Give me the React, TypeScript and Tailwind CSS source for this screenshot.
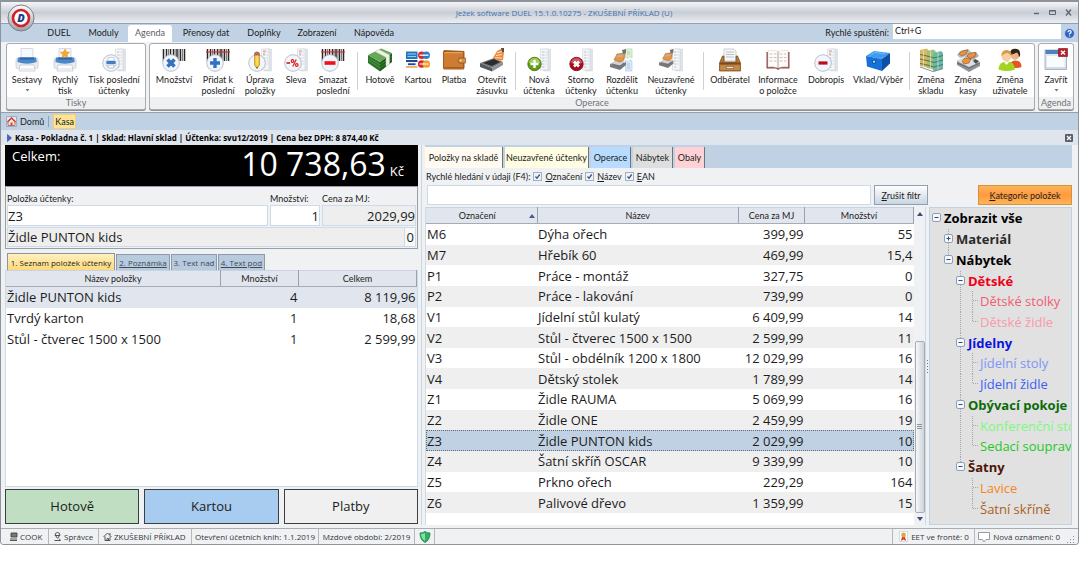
import type { ReactNode } from "react";

/* ---------- ribbon icons ---------- */

function Svg({ children }: { children: ReactNode }) {
  return (
    <svg viewBox="0 0 24 24" className="h-6 w-6 shrink-0" aria-hidden="true">
      {children}
    </svg>
  );
}

function Printer() {
  return (
    <>
      <path d="M6 .5h12V10H6z" fill="#f6f9fc" stroke="#cdd2d9" strokeWidth=".8" />
      <path d="M1 12q0-2 2-2h18q2 0 2 2v7q0 1.500-1.500 1.500h-19Q1 20.500 1 19z" fill="#e9edf2" stroke="#c3c8d0" strokeWidth=".7" />
      <path d="M3 9.500h18l.7 4.500q-9.700 3.500-19.400 0z" fill="#4a88c9" />
      <path d="M5 9.500h14v2H5z" fill="#2f67a8" />
      <path d="M5 17h14l1 6H4z" fill="#fff" stroke="#b9bec7" strokeWidth=".7" />
      <path d="M5.500 21h13" stroke="#d4d8de" strokeWidth="1" />
    </>
  );
}

function Receipt({ x = 13 }: { x?: number }) {
  return (
    <g transform={`translate(${x} 0)`}>
      <path d="M3.500 1h7v22h-7z" fill="#dfe3e8" stroke="#cfd4da" strokeWidth=".5" />
      <path d="M.5 1h7.500v21H.5z" fill="#f5f6f8" stroke="#cdd2d8" strokeWidth=".6" />
      <path d="M2 4h2.500M2 7h2.500M2 10h2.500M2 13h2.500M2 16h2.500M2 19h2.500" stroke="#b9bfc7" strokeWidth=".9" />
      <path d="M5.500 4H7M5.500 7H7M5.500 10H7M5.500 13H7M5.500 16H7" stroke="#cdd2d8" strokeWidth=".9" />
    </g>
  );
}

function Barcode({ beam }: { beam?: boolean }) {
  return (
    <>
      <path d="M1.500 1v12M4.500 1v12M8.500 1v12M11.500 1v12M15 1v12M18.500 1v12M22.500 1v12" stroke="#262626" strokeWidth="1.500" />
      <path d="M6.500 1v12M13.200 1v12M16.800 1v12M20.500 1v12" stroke="#444" strokeWidth=".7" />
      {beam && <path d="M0 4h24" stroke="#e31e24" strokeWidth="1" />}
    </>
  );
}

function Disc() {
  return <circle cx="9" cy="15" r="8.300" fill="#f2f6fb" stroke="#aebccd" strokeWidth=".9" />;
}

function Register() {
  return (
    <>
      <path d="M0 15l6-3 10 1v3l-6 5-10-3z" fill="#75787d" />
      <path d="M0 15l6-3 10 1-6 4z" fill="#d0d3d6" />
      <path d="M4 11l3-6 8-1-1 7-4 2z" fill="#eb9440" stroke="#a05b1d" strokeWidth=".5" />
      <path d="M7 6l6-.5-.5 2.500-6.500.5z" fill="#b8b0a0" />
      <path d="M12 1l4-1v4l-3 1z" fill="#6e7176" />
      <path d="M2 15l8 2 4-3" fill="none" stroke="#55585c" strokeWidth=".8" />
    </>
  );
}

const icons: Record<string, ReactNode> = {
  printer: <Printer />,
  printerStar: (
    <>
      <Printer />
      <path d="M12 1l1.500 2.900 3.200.4-2.400 2.200.6 3.200L12 8.100 9.100 9.700l.6-3.200-2.400-2.200 3.200-.4z" fill="#f9a825" stroke="#e08412" strokeWidth=".4" />
    </>
  ),
  printLast: (
    <>
      <Receipt />
      <Disc />
      <path d="M6 9.500h6V13H6z" fill="#fff" stroke="#a9b6c6" strokeWidth=".6" />
      <path d="M4 13h10v5H4z" fill="#e9edf2" stroke="#a9b6c6" strokeWidth=".5" />
      <path d="M4.500 13h9v3h-9z" fill="#3f7fc4" />
      <path d="M6 17h6v3H6z" fill="#fff" stroke="#8aa0ba" strokeWidth=".6" />
    </>
  ),
  times: (
    <>
      <Barcode />
      <Disc />
      <path d="M5.500 11.500l7 7M12.500 11.500l-7 7" stroke="#3272c0" strokeWidth="3.600" />
    </>
  ),
  plus: (
    <>
      <Barcode beam />
      <Disc />
      <path d="M9 10v10M4 15h10" stroke="#3272c0" strokeWidth="3.400" />
    </>
  ),
  pencil: (
    <>
      <Receipt />
      <path d="M15 3h3M15 6h2" stroke="#e58a92" strokeWidth=".9" />
      <Disc />
      <path d="M6.500 7h5v10L9 20.500 6.500 17z" fill="#f7c62f" stroke="#8f6a12" strokeWidth=".5" />
      <path d="M8.500 7.500h1.200V17H8.500z" fill="#fde58a" />
      <path d="M6.500 5q2.500-2.500 5 0v2h-5z" fill="#c9686b" stroke="#7f3c3e" strokeWidth=".4" />
      <path d="M8.200 19.200h1.600L9 20.700z" fill="#222" />
    </>
  ),
  percent: (
    <>
      <Receipt />
      <path d="M15 3h3M15 6h2" stroke="#e58a92" strokeWidth=".9" />
      <Disc />
      <path d="M2.500 15H6" stroke="#e02020" strokeWidth="1.700" />
      <path d="M8.800 18.500l3.400-7" stroke="#e02020" strokeWidth="1.200" />
      <circle cx="8.500" cy="13" r="1.300" fill="none" stroke="#e02020" strokeWidth="1.200" />
      <circle cx="12.800" cy="17" r="1.300" fill="none" stroke="#e02020" strokeWidth="1.200" />
    </>
  ),
  minus: (
    <>
      <Barcode beam />
      <Disc />
      <path d="M3.500 15h11" stroke="#f0101c" strokeWidth="3.600" />
    </>
  ),
  cash: (
    <>
      <path d="M0 7l12 7v9.500L0 15z" fill="#2d7527" />
      <path d="M12 14l12-9v9l-12 9.500z" fill="#1f5c1c" />
      <path d="M0 7L13 .5 24 5l-12 9z" fill="#67a958" />
      <path d="M1 10l11 7M1 12.500l11 7" stroke="#57a04c" strokeWidth=".7" />
      <path d="M12 17l12-9M12 20l12-9" stroke="#4b9142" strokeWidth=".7" />
      <path d="M7 3.500L18 9.300v9.500l3.500-2.800V7L11 1.500z" fill="#f1f0e6" stroke="#c9c8b6" strokeWidth=".4" />
    </>
  ),
  cards: (
    <>
      <path d="M0 3.500h11.500V11H0z" fill="#2477bd" />
      <path d="M1.500 6h8.500M1.500 8.500h8.500" stroke="#9fcbe9" strokeWidth="1.200" />
      <circle cx="15.700" cy="7.200" r="3.700" fill="#d8262c" />
      <circle cx="20.300" cy="7.200" r="3.700" fill="#2f7ec4" />
      <path d="M13.500 7.200h9" stroke="#fff" strokeWidth="1.300" />
      <path d="M0 12h11.500v7.500H0z" fill="#f4f6fa" />
      <path d="M0 12h11.500v2H0z" fill="#24479b" />
      <path d="M2 16.200h7.500" stroke="#24479b" strokeWidth="1.800" />
      <path d="M0 18.200h11.500v1.500H0z" fill="#e9a33b" />
      <circle cx="15.700" cy="16" r="3.800" fill="#d8262c" />
      <circle cx="20.300" cy="16" r="3.800" fill="#f1a12b" />
      <path d="M13.500 16h9" stroke="#fff" strokeWidth="1.100" />
    </>
  ),
  wallet: (
    <>
      <path d="M1 3.500l1-1.500 20 1 .5 1v16l-1 1.500H2L1 20.500z" fill="#a55a1c" />
      <path d="M2 4h19v16.500H2z" fill="#cd7c31" />
      <path d="M2.500 4.700h18" stroke="#eab277" strokeWidth=".9" />
      <path d="M2.500 19.500h18" stroke="#9c5317" strokeWidth=".8" />
      <path d="M17 10h6.500v5H17q-2-2.500 0-5z" fill="#d98d45" stroke="#7c4311" strokeWidth=".6" />
      <circle cx="18.600" cy="12.500" r="1" fill="#f5dcae" />
    </>
  ),
  drawer: (
    <>
      <path d="M0 15l14-5 9 4-11 6z" fill="#77797d" />
      <path d="M3 15l11-4 6 3-8 4z" fill="#2b2d30" />
      <path d="M0 15v4l12 4.500V20z" fill="#55585c" />
      <path d="M12 20v3.500l11-6.500v-3z" fill="#8d9094" />
      <path d="M13 10l4-7 6-3 1 4-1 8-4 1z" fill="#e9883a" />
      <path d="M21 0h3v4h-2z" fill="#5a4e45" />
      <path d="M17 5l5-1.500M16 7.500l6-1M15 9.800l7 .2" stroke="#fbe2c6" strokeWidth="1.100" />
    </>
  ),
  newReceipt: (
    <>
      <Receipt />
      <circle cx="7.500" cy="16" r="6.700" fill="#5f9c18" stroke="#446f0e" strokeWidth=".8" />
      <path d="M2 15a5.500 5 0 0 1 11 0q-5.500 2.500-11 0z" fill="#9fcf55" />
      <path d="M7.500 12v8M3.500 16h8" stroke="#fff" strokeWidth="2.400" />
    </>
  ),
  cancelReceipt: (
    <>
      <Receipt />
      <circle cx="7.500" cy="16" r="6.700" fill="#a50c1d" stroke="#75101a" strokeWidth=".8" />
      <path d="M2 15a5.500 5 0 0 1 11 0q-5.500 2.500-11 0z" fill="#cf5560" />
      <path d="M5 13.500l5 5M10 13.500l-5 5" stroke="#fff" strokeWidth="2.600" />
    </>
  ),
  splitReceipt: (
    <>
      <path d="M15.500 1H22v9l-2-1.500-2 2-2.500-1z" fill="#dcf2d5" stroke="#a8cf9f" strokeWidth=".6" />
      <path d="M15.500 12.500l2.500 1 2-2 2 1.500v10h-6.500z" fill="#d8e8fb" stroke="#a9c3e2" strokeWidth=".6" />
      <path d="M17 4h3M17 6h3M17 16h3M17 18h3M17 20h3" stroke="#a9b8c7" strokeWidth=".8" />
      <g transform="translate(0 1)">
        <Register />
      </g>
    </>
  ),
  openReceipts: (
    <>
      <Receipt />
      <g transform="translate(0 1) scale(.9)">
        <Register />
      </g>
    </>
  ),
  customer: (
    <>
      <path d="M6 1h10l2 2v10H6z" fill="#f5f6f8" stroke="#b7bbc2" strokeWidth=".7" />
      <path d="M8 4h8M8 6.500h8M8 9h8" stroke="#b0b5bd" strokeWidth=".8" />
      <path d="M4.500 8H6v6h12V8h1.500L22.500 15v8h-21v-8z" fill="#b5793b" stroke="#6f4214" strokeWidth=".7" />
      <path d="M2 14.500h20v2H2z" fill="#7d4a19" />
      <path d="M2.500 17.500h19v4.500h-19z" fill="#c48a4b" />
      <path d="M8.500 18.500h7v2h-7z" fill="#f2e8d8" stroke="#6f4214" strokeWidth=".5" />
    </>
  ),
  book: (
    <>
      <path d="M.5 4v16.500h9.500l2 1.500 2-1.500h9.500V4" fill="#8c4a42" />
      <path d="M2 2.500q6-1 10 1v16.500q-4-1.700-10-1zM22 2.500q-6-1-10 1v16.500q4-1.700 10-1z" fill="#fdfbf9" stroke="#d9cfc8" strokeWidth=".5" />
      <path d="M12 3.500V20" stroke="#b3a79f" strokeWidth=".8" />
      <path d="M3.500 6h3M8 6h2.500M3.500 9.500h3M8 9.500h2.500M3.500 13h3M8 13h2.500M13.500 6h3M18 6h2.500M13.500 9.500h3M18 9.500h2.500M13.500 13h3M18 13h2.500" stroke="#cdc3c0" strokeWidth="1.200" />
    </>
  ),
  creditNote: (
    <>
      <Receipt />
      <path d="M15 3h3M15 6h2" stroke="#e58a92" strokeWidth=".9" />
      <Disc />
      <path d="M4.500 15h9" stroke="#b3111d" strokeWidth="3.200" />
    </>
  ),
  cashbox: (
    <>
      <path d="M0 8l8-5 16 2-8 6z" fill="#3f9bf2" />
      <path d="M0 8l16 3v12L1 18.500z" fill="#1670d6" />
      <path d="M16 11l8-6v10.500L16 23z" fill="#0d4fa5" />
      <path d="M4 7.500L9 4.500l10 1.300" fill="none" stroke="#8ac4f8" strokeWidth=".7" />
      <circle cx="8" cy="14" r="2" fill="#0f57ad" />
      <circle cx="8" cy="13.800" r="1" fill="#dcecfb" />
    </>
  ),
  warehouse: (
    <>
      <path d="M1 2l7-1.500L10 3v17l-9-2z" fill="#d8b765" />
      <path d="M8 3l7-1.500L17 4v18l-9-2z" fill="#a3bf72" />
      <path d="M14 5l8-2 2 2v16l-8 2.500-2-1z" fill="#62bcae" />
      <path d="M1 6.500l7 1.500 7 2 9-2.500M1 11l7 1.500 7 2 9-2.500M1 15.500l7 1.500 7 2 9-2.500" fill="none" stroke="#5d7350" strokeWidth="1.100" />
      <path d="M4.500 2v17M11.500 3v18M19 4v18" stroke="#f3edc8" strokeWidth=".6" />
      <path d="M1 19l13 4.500 10-3" fill="none" stroke="#8a8d90" strokeWidth="1" />
    </>
  ),
  registers: (
    <>
      <path d="M1 13l10-5 13 6v4l-11 6L1 17z" fill="#8f9296" />
      <path d="M1 13l10-5 13 6-11 5z" fill="#dcdee0" />
      <path d="M1 15l12 5 11-5" fill="none" stroke="#5f6266" strokeWidth=".9" />
      <path d="M1 7l3-4 8-2 3 3-7 5-4 1z" fill="#b9bcc0" />
      <path d="M3 6l3-3 6-1-2 4-4 2z" fill="#ef9138" stroke="#7c4412" strokeWidth=".5" />
      <path d="M9 9l3-4 8-1 3 4-6 4z" fill="#a9acb0" />
      <path d="M11 8l3-3 6-.5-1 4-5 2zM6 13l3-3 6 1-2 4-5 1z" fill="#ef9138" stroke="#7c4412" strokeWidth=".5" />
      <path d="M17 13l2-2 4 2-3 3z" fill="#4c4e52" />
    </>
  ),
  users: (
    <>
      <path d="M11 19q1-6 6-6.500 6.500 0 6.500 6.500-5 2-12.500 0z" fill="#e2571f" />
      <circle cx="17" cy="7.500" r="4.300" fill="#edb487" />
      <path d="M12 7Q11.500.5 17.500.7 23 1 22 8l-1 1q0-3-2-4.500Q15 6 12 7z" fill="#33241a" />
      <path d="M.5 21.500q0-7.500 8-8t8.500 8q-8 3-16.500 0z" fill="#a2d421" />
      <path d="M6 14l2.500 3 2.500-3z" fill="#fff" />
      <circle cx="8.500" cy="8.500" r="4.900" fill="#f6cfa4" />
      <path d="M3.500 8.500Q3 2 8.500 2t5 6.500Q12 5.500 9.500 5 6 5 3.500 8.500z" fill="#d99a45" />
    </>
  ),
  closeWindow: (
    <>
      <path d="M1 2h21.500v19.500H1z" fill="#dfe8f2" stroke="#a6b5c8" />
      <path d="M1.500 2h20.500v4H1.500z" fill="#4f81bd" />
      <path d="M3 8h17.500v11.500H3z" fill="#fafbfd" />
      <path d="M1.500 20h20.500" stroke="#c3cfde" strokeWidth="1.200" />
      <path d="M14.500.5H23.500v8h-9z" fill="#b81d28" stroke="#801019" strokeWidth=".6" />
      <path d="M17 2.700l4 3.800M21 2.700l-4 3.800" stroke="#fff" strokeWidth="1.500" />
    </>
  ),
};

/* ---------- ribbon ---------- */

type Item = { icon: string; lines: string[]; w: string; menu?: boolean } | "sep" | "sepWide";

const printItems: Item[] = [
  { icon: "printer", lines: ["Sestavy"], w: "w-[38px]", menu: true },
  { icon: "printerStar", lines: ["Rychlý", "tisk"], w: "w-[38px]" },
  { icon: "printLast", lines: ["Tisk poslední", "účtenky"], w: "w-[60px]" },
];

const operationItems: Item[] = [
  { icon: "times", lines: ["Množství"], w: "w-[46px]" },
  { icon: "plus", lines: ["Přidat k", "poslední"], w: "w-[42px]" },
  { icon: "pencil", lines: ["Úprava", "položky"], w: "w-[42px]" },
  { icon: "percent", lines: ["Sleva"], w: "w-[30px]" },
  { icon: "minus", lines: ["Smazat", "poslední"], w: "w-[44px]" },
  "sep",
  { icon: "cash", lines: ["Hotově"], w: "w-[42px]" },
  { icon: "cards", lines: ["Kartou"], w: "w-[34px]" },
  { icon: "wallet", lines: ["Platba"], w: "w-[38px]" },
  { icon: "drawer", lines: ["Otevřít", "zásuvku"], w: "w-[38px]" },
  "sepWide",
  { icon: "newReceipt", lines: ["Nová", "účtenka"], w: "w-[40px]" },
  { icon: "cancelReceipt", lines: ["Storno", "účtenky"], w: "w-[44px]" },
  { icon: "splitReceipt", lines: ["Rozdělit", "účtenku"], w: "w-[38px]" },
  { icon: "openReceipts", lines: ["Neuzavřené", "účtenky"], w: "w-[60px]" },
  "sep",
  { icon: "customer", lines: ["Odběratel"], w: "w-[50px]" },
  { icon: "book", lines: ["Informace", "o položce"], w: "w-[46px]" },
  { icon: "creditNote", lines: ["Dobropis"], w: "w-[50px]" },
  { icon: "cashbox", lines: ["Vklad/Výběr"], w: "w-[54px]" },
  "sepWide",
  { icon: "warehouse", lines: ["Změna", "skladu"], w: "w-[36px]" },
  { icon: "registers", lines: ["Změna", "kasy"], w: "w-[38px]" },
  { icon: "users", lines: ["Změna", "uživatele"], w: "w-[46px]" },
];

const closeItems: Item[] = [{ icon: "closeWindow", lines: ["Zavřít"], w: "w-full", menu: true }];

function RibbonGroup({ title, items, className }: { title: string; items: Item[]; className: string }) {
  return (
    <section
      className={`flex flex-col rounded-[3px] border border-[#a9abae] bg-white shadow-[0_1px_0_#8f9194] ${className}`}
    >
      <div className="flex h-[53px] px-px">
        {items.map((it, i) =>
          typeof it === "string" ? (
            <span key={i} className={`flex justify-center pt-2 ${it === "sep" ? "w-1" : "w-2"}`}>
              <span className="h-[38px] w-px bg-[#cfd1d4]" />
            </span>
          ) : (
            <button key={i} type="button" className={`flex flex-col items-center pt-1 ${it.w}`}>
              <Svg>{icons[it.icon]}</Svg>
              <span className="pt-[2px] leading-[11px] whitespace-nowrap">
                {it.lines.map((l) => (
                  <span key={l} className="block">
                    {l}
                  </span>
                ))}
              </span>
              {it.menu && (
                <svg viewBox="0 0 5 3" className="mt-1 h-[3px] w-[5px]" aria-hidden="true">
                  <path d="M.5 0h4L2.500 2.500z" fill="#777" />
                </svg>
              )}
            </button>
          ),
        )}
      </div>
      <h2 className="rounded-b-[3px] bg-[#eff0f2] text-center leading-3 text-[#707275]">{title}</h2>
    </section>
  );
}

/* ---------- data ---------- */

const receiptRows = [
  ["Židle PUNTON kids", "4", "8 119,96"],
  ["Tvrdý karton", "1", "18,68"],
  ["Stůl - čtverec 1500 x 1500", "1", "2 599,99"],
];

const stockRows = [
  ["M6", "Dýha ořech", "399,99", "55"],
  ["M7", "Hřebík 60", "469,99", "15,4"],
  ["P1", "Práce - montáž", "327,75", "0"],
  ["P2", "Práce - lakování", "739,99", "0"],
  ["V1", "Jídelní stůl kulatý", "6 409,99", "14"],
  ["V2", "Stůl - čtverec 1500 x 1500", "2 599,99", "11"],
  ["V3", "Stůl - obdélník 1200 x 1800", "12 029,99", "16"],
  ["V4", "Dětský stolek", "1 789,99", "14"],
  ["Z1", "Židle RAUMA", "5 069,99", "16"],
  ["Z2", "Židle ONE", "2 459,99", "19"],
  ["Z3", "Židle PUNTON kids", "2 029,99", "10"],
  ["Z4", "Šatní skříň OSCAR", "9 339,99", "10"],
  ["Z5", "Prkno ořech", "229,29", "164"],
  ["Z6", "Palivové dřevo", "1 359,99", "15"],
];

type Node = { level: 0 | 1 | 2 | 3; text: string; color: string; open?: boolean; last?: boolean; trunk?: "full" | "top" };

const tree: Node[] = [
  { level: 0, text: "Zobrazit vše", color: "text-black", open: true },
  { level: 1, text: "Materiál", color: "text-[#2b2b2b]", open: false, trunk: "full" },
  { level: 1, text: "Nábytek", color: "text-black", open: true, trunk: "top" },
  { level: 2, text: "Dětské", color: "text-[#ee0018]", open: true, trunk: "full" },
  { level: 3, text: "Dětské stolky", color: "text-[#f25c73]", trunk: "full" },
  { level: 3, text: "Dětské židle", color: "text-[#f99aa9]", last: true, trunk: "full" },
  { level: 2, text: "Jídelny", color: "text-[#0914e0]", open: true, trunk: "full" },
  { level: 3, text: "Jídelní stoly", color: "text-[#7e95f8]", trunk: "full" },
  { level: 3, text: "Jídelní židle", color: "text-[#3f5ef5]", last: true, trunk: "full" },
  { level: 2, text: "Obývací pokoje", color: "text-[#0b6b0b]", open: true, trunk: "full" },
  { level: 3, text: "Konferenční sto", color: "text-[#7cfa7c]", trunk: "full" },
  { level: 3, text: "Sedací souprav", color: "text-[#1fc81f]", last: true, trunk: "full" },
  { level: 2, text: "Šatny", color: "text-[#4d1605]", open: true, trunk: "top" },
  { level: 3, text: "Lavice", color: "text-[#f98419]" },
  { level: 3, text: "Šatní skříně", color: "text-[#ab5f20]", last: true },
];

const indents = ["pl-[2px]", "pl-[14px]", "pl-[26px]", "pl-[26px]"];

/* Lines and expander in front of a tree entry; a row is 20 units high. */
function Branch({ node }: { node: Node }) {
  const leaf = node.open === undefined;
  return (
    <svg
      viewBox={leaf ? "0 0 22 20" : "0 0 9 20"}
      className={`h-5 shrink-0 ${leaf ? "mr-[2px] w-[22px]" : "mr-[3px] w-[9px]"}`}
      overflow="visible"
      aria-hidden="true"
    >
      <g fill="none" stroke="#a3a8ae" strokeDasharray="1 1">
        {node.trunk && <path d={node.trunk === "full" ? "M4.500 0v21" : "M4.500 0v10"} />}
        {leaf && <path d={node.last ? "M16.500 0v10" : "M16.500 0v21"} />}
        {leaf && <path d="M17 9.500h6" />}
      </g>
      {!leaf && (
        <>
          <rect x=".5" y="5.500" width="8" height="8" rx="1.500" fill="#f4f7fb" stroke="#8fa0b6" />
          <path d={node.open ? "M2.500 9.500h4" : "M2.500 9.500h4M4.500 7.500v4"} stroke="#34496b" />
        </>
      )}
    </svg>
  );
}

function Check({ letter, rest }: { letter: string; rest: string }) {
  return (
    <label className="flex items-center gap-[3px]">
      <span className="relative flex h-[9px] w-[9px]">
        <input type="checkbox" defaultChecked className="h-[9px] w-[9px] appearance-none border border-[#a3b0c0] bg-[#eef2f8]" />
        <svg viewBox="0 0 9 9" className="pointer-events-none absolute inset-0" aria-hidden="true">
          <path d="M2.500 4.500L4 6.300 6.700 2.500" fill="none" stroke="#34548a" strokeWidth="1.300" />
        </svg>
      </span>
      <span>
        <u>{letter}</u>
        {rest}
      </span>
    </label>
  );
}

const big = "font-['Open_Sans','Noto_Sans',sans-serif] text-[13px]";
const tiny = "font-['Open_Sans','Noto_Sans',sans-serif] text-[8px]";

const th =
  "border-r border-r-[#9aa2ad] border-b border-b-[#a4acb7] border-t border-t-[#c9d2dd] bg-[#e1e6ee] p-0 font-['Lato','Noto_Sans',sans-serif] text-[9px] leading-none font-normal";

/* ---------- page ---------- */

export default function App() {
  return (
    <div className="bg-white">
      <div className="mr-px overflow-hidden rounded-b-[4px] border-x border-b border-[#8f939b] bg-[#eff1f3] font-['Lato','Noto_Sans',sans-serif] text-[9px] leading-[11px] text-[#1c1c1c]">
        {/* title bar */}
        <header className="relative flex h-[23px] items-center border-t-2 border-[#8e929a] bg-linear-to-b from-[#f4f5f7] via-[#c9ced6] to-[#eceef2] pr-[6px] pl-[94px]">
          <svg viewBox="0 0 28 28" className="absolute top-[2px] left-[6px] z-10 h-7 w-7" role="img" aria-label="DUEL">
            <defs>
              <linearGradient id="orb" x1="0" y1="0" x2="0" y2="1">
                <stop offset="0" stopColor="#fdfdfd" />
                <stop offset="1" stopColor="#9da0a5" />
              </linearGradient>
            </defs>
            <circle cx="14" cy="14" r="13" fill="url(#orb)" stroke="#7d8086" />
            <circle cx="14" cy="14" r="8" fill="#fff" stroke="#cf2229" strokeWidth="2.600" />
            <text x="14" y="18" textAnchor="middle" fontFamily="Open Sans" fontWeight="800" fontStyle="italic" fontSize="11" fill="#173f86">
              D
            </text>
          </svg>
          <h1 className={`flex-1 text-center text-[#3f72ae] ${tiny}`}>Ježek software DUEL 15.1.0.10275 - ZKUŠEBNÍ PŘÍKLAD (U)</h1>
          <div className="flex gap-[9px]">
            <button type="button" aria-label="Minimalizovat">
              <svg viewBox="0 0 7 7" className="h-[7px] w-[7px]"><path d="M1 4.500h5" stroke="#5d6570" strokeWidth="1.400" /></svg>
            </button>
            <button type="button" aria-label="Maximalizovat">
              <svg viewBox="0 0 7 7" className="h-[7px] w-[7px]"><path d="M.5 1.500h6v4h-6zM.5 2h6" fill="none" stroke="#5d6570" /></svg>
            </button>
            <button type="button" aria-label="Zavřít okno">
              <svg viewBox="0 0 7 7" className="h-[7px] w-[7px]"><path d="M1 .5l5 6M6 .5l-5 6" stroke="#5d6570" strokeWidth="1.300" /></svg>
            </button>
          </div>
        </header>

        {/* ribbon tabs */}
        <nav className="flex h-[19px] items-end border-t border-[#8fa0b4] bg-[#c1d2e4] pr-[3px] pl-[38px]">
          <button type="button" className="h-4 w-[40px] pb-[3px]">DUEL</button>
          <button type="button" className="h-4 w-[49px] pb-[3px]">Moduly</button>
          <button type="button" className="h-[17px] w-[44px] rounded-t-[3px] bg-white pb-[3px] text-[#5c6066]">Agenda</button>
          <button type="button" className="h-4 w-[68px] pb-[3px]">Přenosy dat</button>
          <button type="button" className="h-4 w-[48px] pb-[3px]">Doplňky</button>
          <button type="button" className="h-4 w-[58px] pb-[3px]">Zobrazení</button>
          <button type="button" className="h-4 w-[56px] pb-[3px]">Nápověda</button>
          <span className="flex-1" />
          <label htmlFor="quick" className="pr-[4px] pb-[4px]">Rychlé spuštění:</label>
          <input id="quick" defaultValue="Ctrl+G" className="mb-[3px] h-[15px] w-[168px] bg-white px-[2px] pb-[2px]" />
          <svg viewBox="0 0 11 11" className="mb-[3px] ml-[3px] h-[11px] w-[11px]" role="img" aria-label="Nápověda">
            <circle cx="5.500" cy="5.500" r="5" fill="#2f65c6" stroke="#c3d2ea" strokeWidth="1" />
            <path d="M4 4.300q0-1.600 1.600-1.600t1.500 1.300q0 .8-1.500 1.800v.7M5.600 7.600v1" fill="none" stroke="#fff" strokeWidth="1.200" />
          </svg>
        </nav>

        {/* ribbon */}
        <div className="flex h-[71px] gap-[3px] border-b border-[#9a9ea4] bg-[#f1f2f4] px-[4px] pt-px pl-[5px]">
          <RibbonGroup title="Tisky" items={printItems} className="h-[67px] w-[140px]" />
          <RibbonGroup title="Operace" items={operationItems} className="h-[67px] flex-1" />
          <RibbonGroup title="Agenda" items={closeItems} className="h-[67px] w-[37px]" />
        </div>

        {/* breadcrumbs */}
        <nav className="flex h-[17px] items-center bg-[#bfd1e3] pl-[5px]">
          <svg viewBox="0 0 11 11" className="mr-[3px] h-[11px] w-[11px]" aria-hidden="true">
            <path d="M.5.500h10v10H.5z" fill="#dfe4ee" stroke="#8f9bb8" strokeWidth=".7" />
            <path d="M2 5.500L5.500 2 9 5.500v4H2z" fill="#f2e4df" stroke="#b9564b" strokeWidth=".8" />
            <path d="M1.500 6L5.500 2l4 4" fill="none" stroke="#cc3b2c" strokeWidth="1.300" />
            <path d="M4.500 6.500h2v3h-2z" fill="#b05a2d" />
          </svg>
          <a href="#domu">Domů</a>
          <span className="mx-1 h-[11px] w-px bg-[#8ea2b9]" />
          <a href="#kasa" className="flex h-[15px] items-center border border-[#f0cf80] bg-[#fde496] px-px">Kasa</a>
        </nav>
        <div className="flex h-[15px] items-center bg-[#dfe5ed] pr-[5px] pl-[6px]">
          <svg viewBox="0 0 5 8" className="mr-[3px] h-[8px] w-[5px]" aria-hidden="true">
            <path d="M.5.500L4.500 4l-4 3.500z" fill="#4a62c9" stroke="#2f3f9f" strokeWidth=".6" />
          </svg>
          <p className={`flex-1 font-bold text-black ${tiny}`}>
            Kasa - Pokladna č. 1 | Sklad: Hlavní sklad | Účtenka: svu12/2019 | Cena bez DPH: 8 874,40 Kč
          </p>
          <button type="button" aria-label="Zavřít agendu">
            <svg viewBox="0 0 8 8" className="h-2 w-2">
              <rect width="8" height="8" rx="1" fill="#5a5f66" />
              <path d="M2 2l4 4M6 2l-4 4" stroke="#fff" strokeWidth="1.200" />
            </svg>
          </button>
        </div>

        <main className="flex pr-[6px] pl-[4px]">
          {/* receipt */}
          <section className="flex w-[413px] shrink-0 flex-col">
            <div className={`flex h-[41px] justify-between bg-black pr-[14px] pl-[7px] text-white ${big}`}>
              <span className="pt-[2px] leading-[18px]">Celkem:</span>
              <span className="flex items-baseline gap-1 text-[32px] leading-[38px]">
                10 738,63 <small className="text-[13px] leading-none">Kč</small>
              </span>
            </div>
            <div className="grid h-[63px] grid-cols-[1fr_50px_94px] grid-rows-[17px_21px_20px] gap-x-[2px] gap-y-px border border-[#9b9fa5] bg-[#f0f1f3] px-px">
              <label htmlFor="code" className="pt-[6px]">Položka účtenky:</label>
              <label htmlFor="qty" className="pt-[6px]">Množství:</label>
              <label htmlFor="price" className="pt-[6px]">Cena za MJ:</label>
              <input id="code" defaultValue="Z3" className={`min-w-0 border border-[#ccdae9] bg-white ${big}`} />
              <input id="qty" defaultValue="1" className={`min-w-0 border border-[#ccdae9] bg-white text-right ${big}`} />
              <input id="price" readOnly defaultValue="2029,99" className={`min-w-0 border border-[#ccdae9] bg-[#eeeeee] text-right ${big}`} />
              <div className={`col-span-3 flex border border-[#ccdae9] bg-[#eeeeee] leading-[18px] ${big}`}>
                <output className="flex-1">Židle PUNTON kids</output>
                <output className="w-[11px] border-l border-[#ccdae9] bg-[#f8f8f8] pr-px text-right">0</output>
              </div>
            </div>

            <div className={`mt-[4px] flex h-[17px] items-end gap-px pl-[2px] whitespace-nowrap ${tiny}`} role="tablist">
              <button type="button" role="tab" className="h-[17px] w-[108px] border border-b-0 border-[#8f959d] bg-linear-to-b from-[#fff0bf] to-[#fcd979]">1. Seznam položek účtenky</button>
              <button type="button" role="tab" className="h-4 w-[54px] border border-b-0 border-[#8f9aa8] bg-[#b8cadd] text-[#3d4a5a] underline">2. Poznámka</button>
              <button type="button" role="tab" className="h-4 w-[46px] border border-b-0 border-[#8f9aa8] bg-[#b8cadd] text-[#3d4a5a]">3. Text nad</button>
              <button type="button" role="tab" className="h-4 w-[47px] border border-b-0 border-[#8f9aa8] bg-[#b8cadd] text-[#3d4a5a] underline">4. Text pod</button>
            </div>
            <div className="h-[217px] border border-t-0 border-[#ccdae9] bg-white">
              <table className={`w-full table-fixed border-collapse leading-[18px] ${big}`}>
                <thead>
                  <tr className="h-4">
                    <th className={th}>Název položky</th>
                    <th className={`${th} w-[78px]`}>Množství</th>
                    <th className={`${th} w-[118px]`}>Celkem</th>
                  </tr>
                </thead>
                <tbody>
                  {receiptRows.map((r, i) => (
                    <tr key={r[0]} className={`h-[21px] ${i === 0 ? "bg-[#e1e6ee]" : ""}`}>
                      <td className="p-0 pl-px">{r[0]}</td>
                      <td className="p-0 pr-px text-right">{r[1]}</td>
                      <td className="p-0 pr-px text-right">{r[2]}</td>
                    </tr>
                  ))}
                </tbody>
              </table>
            </div>
            <div className={`mt-[2px] grid h-[35px] grid-cols-3 gap-[5px] ${big}`}>
              <button type="button" className="border border-[#3c3f42] bg-[#c0dec1]">Hotově</button>
              <button type="button" className="border border-[#3c3f42] bg-[#a8cbf0]">Kartou</button>
              <button type="button" className="border border-[#3c3f42] bg-[#f0f0f0]">Platby</button>
            </div>
            <div className="h-px" />
          </section>

          <div className="mx-[3px] flex w-px items-center bg-[#cbd5e0]" />

          {/* stock */}
          <section className="flex min-w-0 flex-1 flex-col">
            <div className="flex h-[23px] gap-[2px] bg-[#bfd1e3] pt-[2px] whitespace-nowrap" role="tablist">
              <button type="button" role="tab" className="w-[78px] border-r border-[#6f747b] bg-[#fffbf0]">Položky na skladě</button>
              <button type="button" role="tab" className="w-[84px] border-r border-[#6f747b] bg-[#fffde2]">Neuzavřené účtenky</button>
              <button type="button" role="tab" className="w-[40px] border-r border-[#6f747b] bg-[#b8dcff]">Operace</button>
              <button type="button" role="tab" className="w-[40px] border-r border-[#6f747b] bg-[#dedede]">Nábytek</button>
              <button type="button" role="tab" className="w-[30px] border-r border-[#6f747b] bg-[#ffd3d5]">Obaly</button>
            </div>
            <div className="flex h-[17px] items-center gap-[3px] pl-px">
              <label htmlFor="search">Rychlé hledání v údaji (F4):</label>
              <Check letter="O" rest="značení" />
              <Check letter="N" rest="ázev" />
              <Check letter="E" rest="AN" />
            </div>
            <div className="flex h-[22px] items-start pb-[2px] pl-[2px]">
              <input id="search" className={`h-5 min-w-0 flex-1 border border-[#ccdae9] bg-white ${big}`} />
              <button type="button" className="ml-[3px] h-5 w-[54px] border border-[#8da0b5] bg-linear-to-b from-white via-[#e4e9ee] to-[#c9d6e2]">
                <u>Z</u>rušit filtr
              </button>
              <button type="button" className="ml-[50px] h-5 w-[94px] border border-[#d79336] bg-linear-to-b from-[#fdb35f] via-[#ff9a3c] to-[#ffb459]">
                <u>K</u>ategorie položek
              </button>
            </div>

            <div className="flex min-h-0 flex-1">
              <div className="min-w-0 flex-1 border-l border-[#ccdae9] bg-white pb-[12px]">
                <table className={`h-full w-full table-fixed border-collapse leading-[18px] ${big}`}>
                  <thead>
                    <tr className="h-4">
                      <th className={`${th} w-[111px]`}>
                        <span className="flex items-center pr-[2px]">
                          <span className="flex-1">Označení</span>
                          <svg viewBox="0 0 6 4" className="h-1 w-[6px]" aria-hidden="true">
                            <path d="M0 4l3-4 3 4z" fill="#4c5a8c" />
                          </svg>
                        </span>
                      </th>
                      <th className={th}>Název</th>
                      <th className={`${th} w-[66px]`}>Cena za MJ</th>
                      <th className={`${th} w-[109px]`}>Množství</th>
                    </tr>
                  </thead>
                  <tbody>
                    {stockRows.map((r, i) => (
                      <tr
                        key={r[0]}
                        className={
                          r[0] === "Z3"
                            ? "bg-[#c0d1e3] outline outline-1 -outline-offset-1 outline-dotted outline-[#5d6b7c]"
                            : i % 2
                              ? "bg-[#efefef]"
                              : "bg-white"
                        }
                      >
                        <td className="p-0 pl-px">{r[0]}</td>
                        <td className="p-0 pl-px">{r[1]}</td>
                        <td className="p-0 pr-px text-right">{r[2]}</td>
                        <td className="p-0 pr-px text-right">{r[3]}</td>
                      </tr>
                    ))}
                  </tbody>
                </table>
              </div>
              <div className="flex w-[12px] flex-col items-center border-r border-[#ccdae9] bg-[#eff1f4]">
                <svg viewBox="0 0 6 4" className="mt-[5px] h-1 w-[6px]" aria-hidden="true">
                  <path d="M0 4l3-4 3 4z" fill="#3f4d78" />
                </svg>
                <span className="flex-[125]" />
                <span className="flex w-[10px] flex-[171] flex-col items-center justify-center gap-px rounded-[2px] border border-[#a4acb6] bg-linear-to-r from-[#f7f8f9] to-[#cfd3d8]">
                  <span className="h-px w-[5px] bg-[#8c939c]" />
                  <span className="h-px w-[5px] bg-[#8c939c]" />
                  <span className="h-px w-[5px] bg-[#8c939c]" />
                </span>
                <svg viewBox="0 0 6 4" className="mt-[4px] mb-[4px] h-1 w-[6px]" aria-hidden="true">
                  <path d="M0 0h6L3 4z" fill="#3f4d78" />
                </svg>
              </div>
              <div className="flex w-[3px] flex-col items-center justify-center gap-[2px]">
                {[0, 1, 2, 3, 4].map((n) => (
                  <span key={n} className="h-px w-px bg-[#6b7684]" />
                ))}
              </div>
              <ul className={`grid w-[143px] auto-rows-fr overflow-hidden border border-[#c3d1e0] bg-[#e1e1e1] pb-[5px] whitespace-nowrap ${big}`}>
                {tree.map((n) => (
                  <li key={n.text} className={`flex min-h-0 items-center leading-[18px] ${indents[n.level]} ${n.color}`}>
                    <Branch node={n} />
                    <span className={n.level < 3 ? "font-bold" : ""}>{n.text}</span>
                  </li>
                ))}
              </ul>
            </div>
          </section>
        </main>

        {/* status bar */}
        <footer className={`mt-[3px] flex h-4 items-center border-t border-[#a9adb3] bg-[#f0f1f3] pl-[8px] whitespace-nowrap text-[#33373c] ${tiny}`}>
          <span className="flex h-full w-[40px] items-center gap-[2px] border-r border-[#b5b9bf]">
            <svg viewBox="0 0 9 9" className="h-[9px] w-[9px] shrink-0" aria-hidden="true">
              <path d="M2 1h6v4H2zM1 7h7M1 8.500h7" fill="#777" stroke="#444" strokeWidth=".9" />
            </svg>
            COOK
          </span>
          <span className="flex h-full w-[50px] items-center gap-[2px] border-r border-[#b5b9bf] pl-[4px]">
            <svg viewBox="0 0 9 9" className="h-[9px] w-[9px] shrink-0" aria-hidden="true">
              <path d="M2 3.500q0-3 2.500-3T7 3.500H2zM3 3.500q0 2.500 1.500 2.500T6 3.500M1.500 8.500h6L6 6.500" fill="none" stroke="#444" strokeWidth=".9" />
            </svg>
            Správce
          </span>
          <span className="flex h-full w-[93px] items-center gap-[2px] border-r border-[#b5b9bf] pl-[4px]">
            <svg viewBox="0 0 9 9" className="h-[9px] w-[9px] shrink-0" aria-hidden="true">
              <path d="M.5 5L4.500 1l4 4M2 4.500v4h5v-4M4 8.500v-2h1.500v2M7 3V1" fill="none" stroke="#444" strokeWidth=".9" />
            </svg>
            ZKUŠEBNÍ PŘÍKLAD
          </span>
          <span className="flex h-full w-[127px] items-center justify-center border-r border-[#b5b9bf]">Otevření účetních knih: 1.1.2019</span>
          <span className="flex h-full w-[96px] items-center justify-center border-r border-[#b5b9bf]">Mzdové období: 2/2019</span>
          <span className="flex h-full w-[20px] items-center justify-center border-r border-[#b5b9bf]">
            <svg viewBox="0 0 12 12" className="h-3 w-3" aria-hidden="true">
              <path d="M1 2q3 0 5-1.500Q8 2 11 2q0 7-5 9.500Q1 9 1 2z" fill="#2fae66" stroke="#1e7f46" strokeWidth=".8" />
              <path d="M2 3q2.500 0 4-1v8Q2.500 8 2 3z" fill="#7fe0a5" />
            </svg>
          </span>
          <span className="flex-1" />
          <span className="flex h-full w-[83px] items-center gap-[3px] border-x border-[#b5b9bf] pl-[6px]">
            <svg viewBox="0 0 9 11" className="h-[11px] w-[9px] shrink-0" aria-hidden="true">
              <path d="M.5.500h8v10h-8z" fill="#fff" stroke="#c5c8cc" strokeWidth=".6" />
              <path d="M3 6l-1 4 2.500-1.500L7 10 6 6z" fill="#d33a2c" />
              <circle cx="4.500" cy="4" r="2.400" fill="#d9a94d" />
            </svg>
            EET ve frontě: 0
          </span>
          <span className="flex h-full items-center gap-[3px] pl-[3px]">
            <svg viewBox="0 0 12 12" className="h-3 w-3" aria-hidden="true">
              <path d="M.5 1.500h11v7H8L6 11 4.500 8.500h-4z" fill="#fff" stroke="#8b9097" strokeWidth=".9" />
            </svg>
            Nová oznámení: 0
          </span>
          <svg viewBox="0 0 9 9" className="mr-[3px] ml-[6px] h-[9px] w-[9px] self-end" aria-hidden="true">
            <path d="M7 1h1v1H7zM4 4h1v1H4zM7 4h1v1H7zM1 7h1v1H1zM4 7h1v1H4zM7 7h1v1H7z" fill="#8b9097" />
          </svg>
        </footer>
      </div>
    </div>
  );
}
